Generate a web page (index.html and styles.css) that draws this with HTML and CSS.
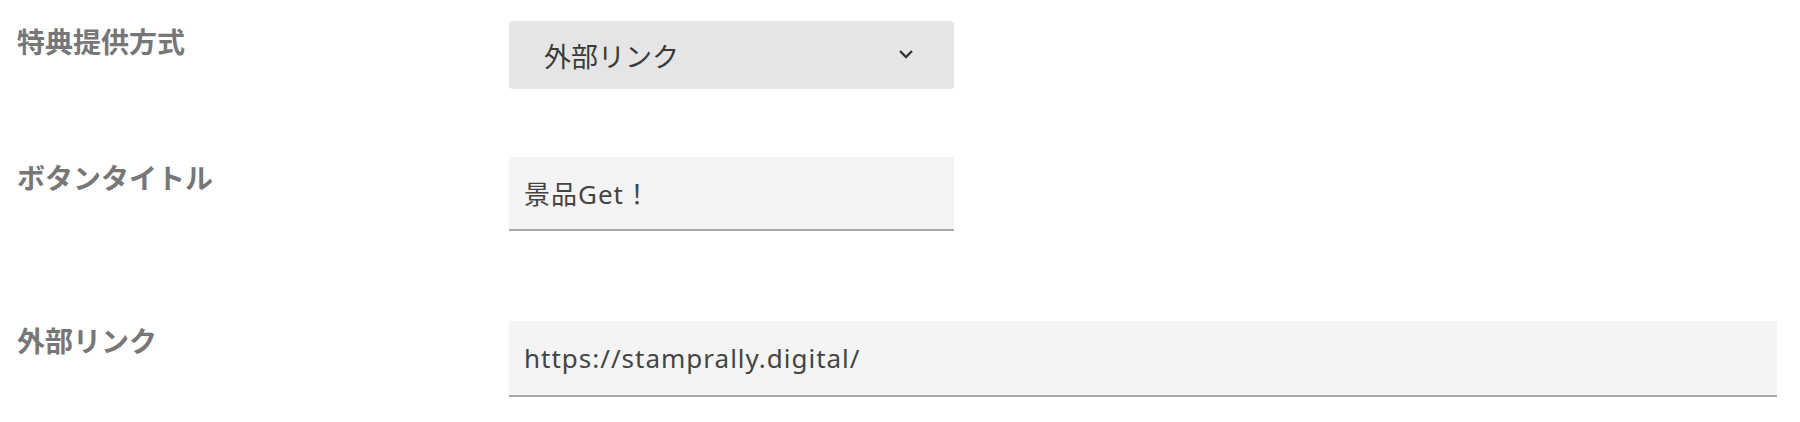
FILE: index.html
```html
<!DOCTYPE html>
<html lang="ja">
<head>
    <meta charset="UTF-8">
    <meta name="viewport" content="width=device-width, initial-scale=1.0">
    <title>特典設定</title>
    <link rel="stylesheet" href="styles.css">
</head>
<body>
    <div class="form">
        <div class="form-row row-select">
            <label class="form-label" for="giftType">特典提供方式</label>
            <div class="form-field">
                <div class="select-box">
                    <select id="giftType" class="select-input">
                        <option>外部リンク</option>
                        <option>クーポン</option>
                    </select>
                    <svg class="select-arrow" width="16" height="10" viewBox="0 0 16 10">
                        <path d="M2 2 L8 8 L14 2" fill="none" stroke="#333" stroke-width="2.4"/>
                    </svg>
                </div>
            </div>
        </div>

        <div class="form-row row-title">
            <label class="form-label" for="buttonTitle">ボタンタイトル</label>
            <div class="form-field">
                <input id="buttonTitle" class="text-input short" type="text" value="景品Get！">
            </div>
        </div>

        <div class="form-row row-link">
            <label class="form-label" for="externalLink">外部リンク</label>
            <div class="form-field">
                <input id="externalLink" class="text-input" type="text" value="https://stamprally.digital/">
            </div>
        </div>
    </div>
</body>
</html>
```

FILE: styles.css
```css
body {
    font-family: "Noto Sans", "Noto Sans CJK JP", sans-serif;
    margin: 0;
    padding: 0;
    background-color: #fff;
}
.form {
    padding: 21px 23px 0 17px;
}
.form-row {
    display: grid;
    grid-template-columns: 492px 1fr;
}
.row-title {
    margin-top: 68px;
}
.row-link {
    margin-top: 90px;
}
.form-label {
    font-family: "Noto Sans CJK JP", sans-serif;
    font-size: 28px;
    font-weight: bold;
    color: #777;
    line-height: 1.2;
    padding-top: 4px;
}
.row-link .form-label {
    padding-top: 3px;
}
.select-box {
    position: relative;
    width: 445px;
}
.select-input {
    appearance: none;
    -webkit-appearance: none;
    width: 100%;
    height: 68px;
    border: none;
    border-radius: 4px;
    background-color: #e5e5e5;
    font-family: "Noto Sans CJK JP", sans-serif;
    font-size: 27px;
    color: #3a3a3a;
    padding: 0 35px;
    outline: none;
}
.select-arrow {
    position: absolute;
    top: 50%;
    right: 40px;
    margin-top: -6px;
    pointer-events: none;
}
.text-input {
    box-sizing: border-box;
    width: 100%;
    height: 76px;
    border: none;
    border-bottom: 2px solid #aaa;
    background-color: #f4f4f4;
    font-family: "Noto Sans", "Noto Sans CJK JP", sans-serif;
    font-size: 26px;
    letter-spacing: 1px;
    color: #444;
    padding: 0 15px;
    outline: none;
}
.text-input.short {
    width: 445px;
    height: 74px;
}
```
